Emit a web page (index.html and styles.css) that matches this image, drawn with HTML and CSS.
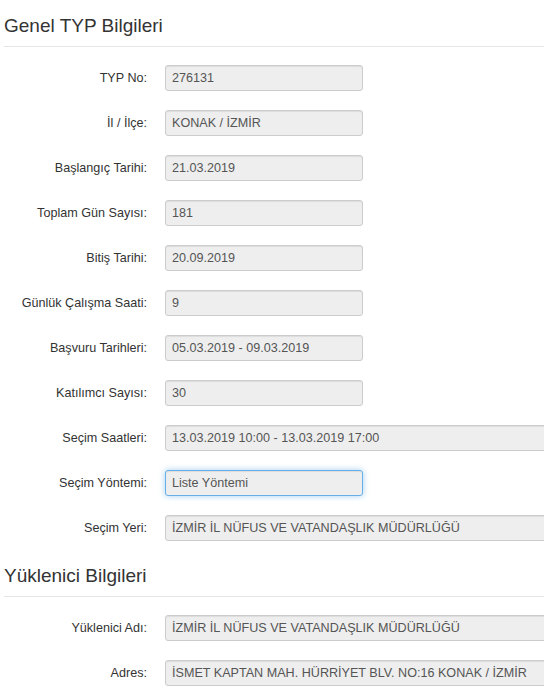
FILE: index.html
```html
<!DOCTYPE html>
<html lang="tr">
<head>
    <meta charset="UTF-8">
    <title>Genel TYP Bilgileri</title>
    <link rel="stylesheet" href="styles.css">
</head>
<body>
    <div class="section">
        <h4 class="section-title">Genel TYP Bilgileri</h4>
        <div class="form">
            <div class="form-row">
                <label>TYP No:</label>
                <input type="text" class="field" value="276131" readonly>
            </div>
            <div class="form-row">
                <label>İl / İlçe:</label>
                <input type="text" class="field" value="KONAK / İZMİR" readonly>
            </div>
            <div class="form-row">
                <label>Başlangıç Tarihi:</label>
                <input type="text" class="field" value="21.03.2019" readonly>
            </div>
            <div class="form-row">
                <label>Toplam Gün Sayısı:</label>
                <input type="text" class="field" value="181" readonly>
            </div>
            <div class="form-row">
                <label>Bitiş Tarihi:</label>
                <input type="text" class="field" value="20.09.2019" readonly>
            </div>
            <div class="form-row">
                <label>Günlük Çalışma Saati:</label>
                <input type="text" class="field" value="9" readonly>
            </div>
            <div class="form-row">
                <label>Başvuru Tarihleri:</label>
                <input type="text" class="field" value="05.03.2019 - 09.03.2019" readonly>
            </div>
            <div class="form-row">
                <label>Katılımcı Sayısı:</label>
                <input type="text" class="field" value="30" readonly>
            </div>
            <div class="form-row">
                <label>Seçim Saatleri:</label>
                <input type="text" class="field wide" value="13.03.2019 10:00 - 13.03.2019 17:00" readonly>
            </div>
            <div class="form-row">
                <label>Seçim Yöntemi:</label>
                <input type="text" class="field focused" value="Liste Yöntemi" readonly>
            </div>
            <div class="form-row">
                <label>Seçim Yeri:</label>
                <input type="text" class="field wide" value="İZMİR İL NÜFUS VE VATANDAŞLIK MÜDÜRLÜĞÜ" readonly>
            </div>
        </div>
    </div>

    <div class="section">
        <h4 class="section-title">Yüklenici Bilgileri</h4>
        <div class="form">
            <div class="form-row">
                <label>Yüklenici Adı:</label>
                <input type="text" class="field wide" value="İZMİR İL NÜFUS VE VATANDAŞLIK MÜDÜRLÜĞÜ" readonly>
            </div>
            <div class="form-row">
                <label>Adres:</label>
                <input type="text" class="field wide" value="İSMET KAPTAN MAH. HÜRRİYET BLV. NO:16 KONAK / İZMİR" readonly>
            </div>
        </div>
    </div>
</body>
</html>
```

FILE: styles.css
```css
body { margin: 0; font-family: "Liberation Sans", Arial, sans-serif; font-size: 12.6px; color: #333; background: #fff; overflow: hidden; }
.section { padding-left: 4px; margin-bottom: 9px; }
.section-title { margin: 0; padding: 15px 0 9px; font-size: 19px; font-weight: normal; line-height: 22px; color: #333; border-bottom: 1px solid #e5e5e5; }
.form { display: flex; flex-direction: column; gap: 19px; padding-top: 18px; }
.form-row { display: flex; align-items: center; gap: 18px; }
.form-row label { flex-shrink: 0; width: 143px; text-align: right; color: #333; }
.field { box-sizing: border-box; flex-shrink: 0; width: 198px; height: 26px; padding: 0 6px; border: 1px solid #ccc; border-radius: 3px; background: #eee; color: #555; font-family: "Liberation Sans", Arial, sans-serif; font-size: 12.6px; box-shadow: inset 0 1px 1px rgba(0,0,0,.075); outline: none; }
.field.wide { width: 420px; }
.field.focused { border-color: #66afe9; box-shadow: inset 0 1px 1px rgba(0,0,0,.075), 0 0 6px rgba(102,175,233,.6); }
```
